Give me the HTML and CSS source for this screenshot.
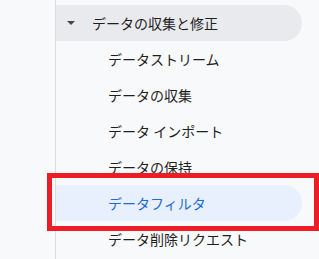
FILE: index.html
```html
<!DOCTYPE html>
<html lang="ja">
<head>
    <meta charset="UTF-8">
    <title>データの収集と修正</title>
    <link rel="stylesheet" href="styles.css">
</head>
<body>

<div class="sidebar">
    <div class="nav-group">
        <div class="nav-row nav-parent">
            <span class="caret"></span>
            <span>データの収集と修正</span>
        </div>
        <div class="nav-row nav-item">データストリーム</div>
        <div class="nav-row nav-item">データの収集</div>
        <div class="nav-row nav-item">データ インポート</div>
        <div class="nav-row nav-item">データの保持</div>
        <div class="nav-row nav-item active">データフィルタ</div>
        <div class="nav-row nav-item">データ削除リクエスト</div>
    </div>
</div>

<!-- annotation box -->
<div class="callout"></div>

</body>
</html>
```

FILE: styles.css
```css
html, body {
    margin: 0;
    height: 100%;
    background-color: #f8f9fa;
    font-family: "Noto Sans CJK JP", "Noto Sans", sans-serif;
    font-size: 14px;
    color: #1f1f1f;
    overflow: hidden;
}

.sidebar {
    margin-left: 55px;
    height: 100%;
    border-left: 1px solid #dadce0;
}

.nav-group {
    padding-top: 5px;
}

.nav-row {
    display: flex;
    align-items: center;
    width: 246px;
    height: 36px;
    border-radius: 0 18px 18px 0;
    box-sizing: border-box;
}

.nav-parent {
    background-color: #e9eaee;
    padding-left: 11px;
}

.caret {
    width: 0;
    height: 0;
    border-left: 4px solid transparent;
    border-right: 4px solid transparent;
    border-top: 4px solid #444746;
    margin-right: 17px;
}

.nav-item {
    padding-left: 52px;
}

.nav-item.active {
    background-color: #e8effd;
    color: #1a6ddb;
}

.callout {
    position: absolute;
    left: 47px;
    top: 173px;
    width: 272px;
    height: 58px;
    border: 5px solid #ee1c25;
    box-sizing: border-box;
}
```
